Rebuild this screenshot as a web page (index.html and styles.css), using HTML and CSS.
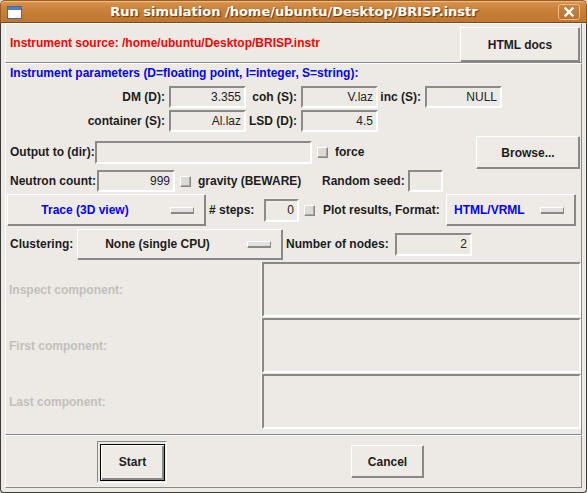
FILE: index.html
```html
<!DOCTYPE html>
<html>
<head>
<meta charset="utf-8">
<link rel="stylesheet" href="styles.css">
</head>
<body>
<div class="window">
  <div class="titlebar">
    <svg class="win-icon" width="15" height="13" viewBox="0 0 15 13"><rect x="0.5" y="0.5" width="14" height="12" fill="#fff" stroke="#46689c"/><rect x="1" y="1" width="13" height="3" fill="#4f7dbd"/></svg>
    <div class="title">Run simulation /home/ubuntu/Desktop/BRISP.instr</div>
    <div class="close"><svg width="12" height="10" viewBox="0 0 12 10"><path d="M2.5 1.5 L9.5 8.5 M9.5 1.5 L2.5 8.5" stroke="#fff" stroke-width="2.4" stroke-linecap="square"/></svg></div>
  </div>
  <div class="body">
    <div class="frame src">
      <span class="src-text">Instrument source: /home/ubuntu/Desktop/BRISP.instr</span>
      <div class="btn docs">HTML docs</div>
    </div>

    <div class="frame main">
      <div class="params">
        <div class="heading">Instrument parameters (D=floating point, I=integer, S=string):</div>
        <div class="pgrid">
          <span class="plabel">DM (D):</span><span class="entry">3.355</span>
          <span class="plabel">coh (S):</span><span class="entry">V.laz</span>
          <span class="plabel">inc (S):</span><span class="entry">NULL</span>
          <span class="plabel">container (S):</span><span class="entry">Al.laz</span>
          <span class="plabel">LSD (D):</span><span class="entry">4.5</span>
        </div>
      </div>

      <div class="opts">
        <div class="row row-out">
          <span class="lbl lbl-out">Output to (dir):</span>
          <span class="entry e-out"></span>
          <span class="check ck-force"></span>
          <span class="lbl lbl-force">force</span>
          <span class="spacer"></span>
          <div class="btn browse">Browse...</div>
        </div>
        <div class="row row-ncount">
          <span class="lbl lbl-ncount">Neutron count:</span>
          <span class="entry e-ncount">999</span>
          <span class="check ck-grav"></span>
          <span class="lbl lbl-grav">gravity (BEWARE)</span>
          <span class="lbl lbl-seed">Random seed:</span>
          <span class="entry e-seed"></span>
        </div>
        <div class="row row-trace">
          <div class="menubtn mb-trace"><span class="mb-text blue">Trace (3D view)</span><span class="indicator"></span></div>
          <span class="lbl lbl-steps"># steps:</span>
          <span class="entry e-steps">0</span>
          <span class="check ck-plot"></span>
          <span class="lbl lbl-plot">Plot results, Format:</span>
          <div class="menubtn mb-format"><span class="mb-text blue">HTML/VRML</span><span class="indicator"></span></div>
        </div>
        <div class="row row-cluster">
          <span class="lbl lbl-cluster">Clustering:</span>
          <div class="menubtn mb-cluster"><span class="mb-text">None (single CPU)</span><span class="indicator"></span></div>
          <span class="lbl lbl-nodes">Number of nodes:</span>
          <span class="entry e-nodes">2</span>
        </div>
      </div>

      <div class="comps">
        <div class="comp-row"><span class="dis">Inspect component:</span><div class="textbox"></div></div>
        <div class="comp-row"><span class="dis">First component:</span><div class="textbox"></div></div>
        <div class="comp-row"><span class="dis">Last component:</span><div class="textbox"></div></div>
      </div>
    </div>

    <div class="frame actions">
      <div class="default-ring"><div class="btn start">Start</div></div>
      <div class="btn cancel">Cancel</div>
    </div>
  </div>
</div>
</body>
</html>
```
FILE: styles.css
```css
* { box-sizing: border-box; }
html, body { margin: 0; padding: 0; }
body {
  width: 587px;
  height: 493px;
  overflow: hidden;
  background: #dcd8d2;
  font-family: "Liberation Sans", Arial, sans-serif;
  font-size: 12px;
  font-weight: bold;
  color: #1c1c1c;
}
.window {
  width: 587px;
  height: 493px;
  display: flex;
  flex-direction: column;
}
.titlebar {
  height: 23px;
  flex: none;
  display: flex;
  align-items: center;
  border: 1px solid #9a5e22;
  border-bottom: 1px solid #7a4a1a;
  border-radius: 5px 5px 0 0;
  background: linear-gradient(#e3aa6c 0, #d48f48 2px, #c98238 40%, #c07631 100%);
  box-shadow: inset 0 1px 0 #eeb97f;
}
.win-icon { margin-left: 6px; margin-top: 1px; flex: none; }
.title {
  flex: 1;
  text-align: center;
  font-family: "DejaVu Sans", sans-serif;
  font-size: 13px;
  font-weight: bold;
  color: #fff;
  text-shadow: 1px 1px 1px #5b3610;
  padding-left: 8px;
}
.close {
  width: 22px;
  height: 16px;
  margin-right: 6px;
  border: 1px solid #e9bd8a;
  border-radius: 3px;
  background: linear-gradient(#c88443, #b8742f);
  display: flex;
  align-items: center;
  justify-content: center;
}
.body {
  flex: 1;
  background: #edeae6;
  border: 1px solid #3e3c3a;
  border-top: none;
  border-radius: 0 0 4px 4px;
  padding: 0 4px 4px 4px;
  display: flex;
  flex-direction: column;
}
.frame {
  border: 1px solid;
  border-color: #ffffff #8d8b88 #8d8b88 #ffffff;
  flex: none;
}
/* source frame */
.src {
  height: 40px;
  display: flex;
  align-items: flex-end;
  justify-content: space-between;
}
.src-text {
  color: #ff0000;
  margin-left: 4px;
  align-self: center;
}
.btn {
  display: flex;
  align-items: center;
  justify-content: center;
  background: #eeebe7;
  border: 1px solid;
  border-color: #ffffff #8a8885 #8a8885 #ffffff;
  box-shadow: inset -1px -1px 0 #8a8885;
  color: #1c1c1c;
}
.docs {
  width: 120px;
  height: 35px;
  margin-right: 1px;
}
/* main frame: parameters, options, components */
.main {
  height: 372px;
  display: flex;
  flex-direction: column;
}
.params {
  height: 70px;
  flex: none;
}
.heading {
  color: #0000ff;
  margin: 2px 0 0 4px;
  line-height: 14px;
}
.pgrid {
  margin-top: 6px;
  display: grid;
  grid-template-columns: 163px 77px 55px 77px 47px 77px;
  grid-auto-rows: 22px;
  row-gap: 2px;
}
.plabel {
  text-align: right;
  padding-right: 4px;
  line-height: 22px;
}
.entry {
  display: block;
  border: 2px solid;
  border-color: #8c8a87 #ffffff #ffffff #8c8a87;
  background: #edeae6;
  font-weight: normal;
  color: #222;
  text-align: right;
  padding-right: 3px;
  line-height: 18px;
  height: 22px;
  flex: none;
}
/* options */
.opts {
  height: 127px;
  flex: none;
  padding-top: 1px;
}
.row {
  display: flex;
  align-items: center;
}
.lbl { flex: none; white-space: nowrap; }
.spacer { flex: 1; }
.check {
  flex: none;
  width: 11px;
  height: 11px;
  background: #dedbd6;
  border: 1px solid;
  border-color: #ffffff #8a8885 #8a8885 #ffffff;
  box-shadow: inset -1px -1px 0 #a7a5a1;
}
.row-out { height: 34px; }
.lbl-out { margin-left: 4px; width: 85px; }
.e-out { width: 217px; height: 23px; }
.ck-force { margin-left: 5px; }
.lbl-force { margin-left: 7px; }
.browse { width: 104px; height: 33px; margin-right: 1px; margin-top: 1px; }

.row-ncount { height: 24px; }
.lbl-ncount { margin-left: 4px; width: 87px; }
.e-ncount { width: 78px; height: 22px; }
.ck-grav { margin-left: 5px; }
.lbl-grav { margin-left: 7px; width: 124px; }
.lbl-seed { width: 86px; }
.e-seed { width: 35px; height: 22px; }

.row-trace { height: 32px; margin-top: 1px; }
.menubtn {
  flex: none;
  display: flex;
  align-items: center;
  background: #eeebe7;
  border: 1px solid;
  border-color: #ffffff #8a8885 #8a8885 #ffffff;
  box-shadow: inset -1px -1px 0 #8a8885;
}
.mb-text { flex: 1; text-align: center; white-space: nowrap; }
.blue { color: #0000ff; }
.indicator {
  flex: none;
  width: 24px;
  height: 7px;
  margin-right: 11px;
  background: #e4e1dc;
  border: 1px solid;
  border-color: #ffffff #8a8885 #8a8885 #ffffff;
  box-shadow: inset 0 -1px 0 #8a8885;
}
.mb-trace { margin-left: 1px; width: 199px; height: 32px; }
.mb-trace .mb-text { padding-right: 8px; }
.lbl-steps { margin-left: 3px; width: 55px; }
.e-steps { width: 35px; height: 23px; }
.ck-plot { margin-left: 5px; }
.lbl-plot { margin-left: 8px; width: 123px; }
.mb-format { width: 130px; height: 32px; }
.mb-format .mb-text { text-align: left; padding-left: 7px; }

.row-cluster { height: 32px; margin-top: 2px; }
.lbl-cluster { margin-left: 4px; width: 67px; }
.mb-cluster { width: 206px; height: 31px; }
.mb-cluster .mb-text { padding-right: 10px; }
.lbl-nodes { margin-left: 3px; width: 109px; }
.e-nodes { width: 77px; height: 23px; }

/* components */
.comps {
  height: 173px;
  flex: none;
  padding-top: 1px;
  padding-bottom: 5px;
  display: flex;
  flex-direction: column;
  gap: 1px;
}
.comp-row {
  height: 55px;
  flex: none;
  display: flex;
  align-items: center;
}
.dis {
  color: #c2bfbb;
  margin-left: 3px;
}
.textbox {
  margin-left: auto;
  width: 319px;
  height: 55px;
  border: 2px solid;
  border-color: #8a8885 #ffffff #ffffff #8a8885;
  box-shadow: -1px 0 0 #ffffff;
  background: #edeae6;
}
/* actions */
.actions {
  height: 53px;
  display: flex;
  align-items: center;
}
.default-ring {
  margin-left: 91px;
  width: 70px;
  height: 42px;
  border: 1px solid;
  border-color: #8a8885 #ffffff #ffffff #8a8885;
  padding: 2px 1px 1px 2px;
}
.start {
  width: 65px;
  height: 37px;
  border: 1px solid #000;
  box-shadow: inset 1px 1px 0 #ffffff, inset -2px -2px 0 #8a8885;
}
.cancel {
  margin-left: 184px;
  width: 73px;
  height: 33px;
}
```
